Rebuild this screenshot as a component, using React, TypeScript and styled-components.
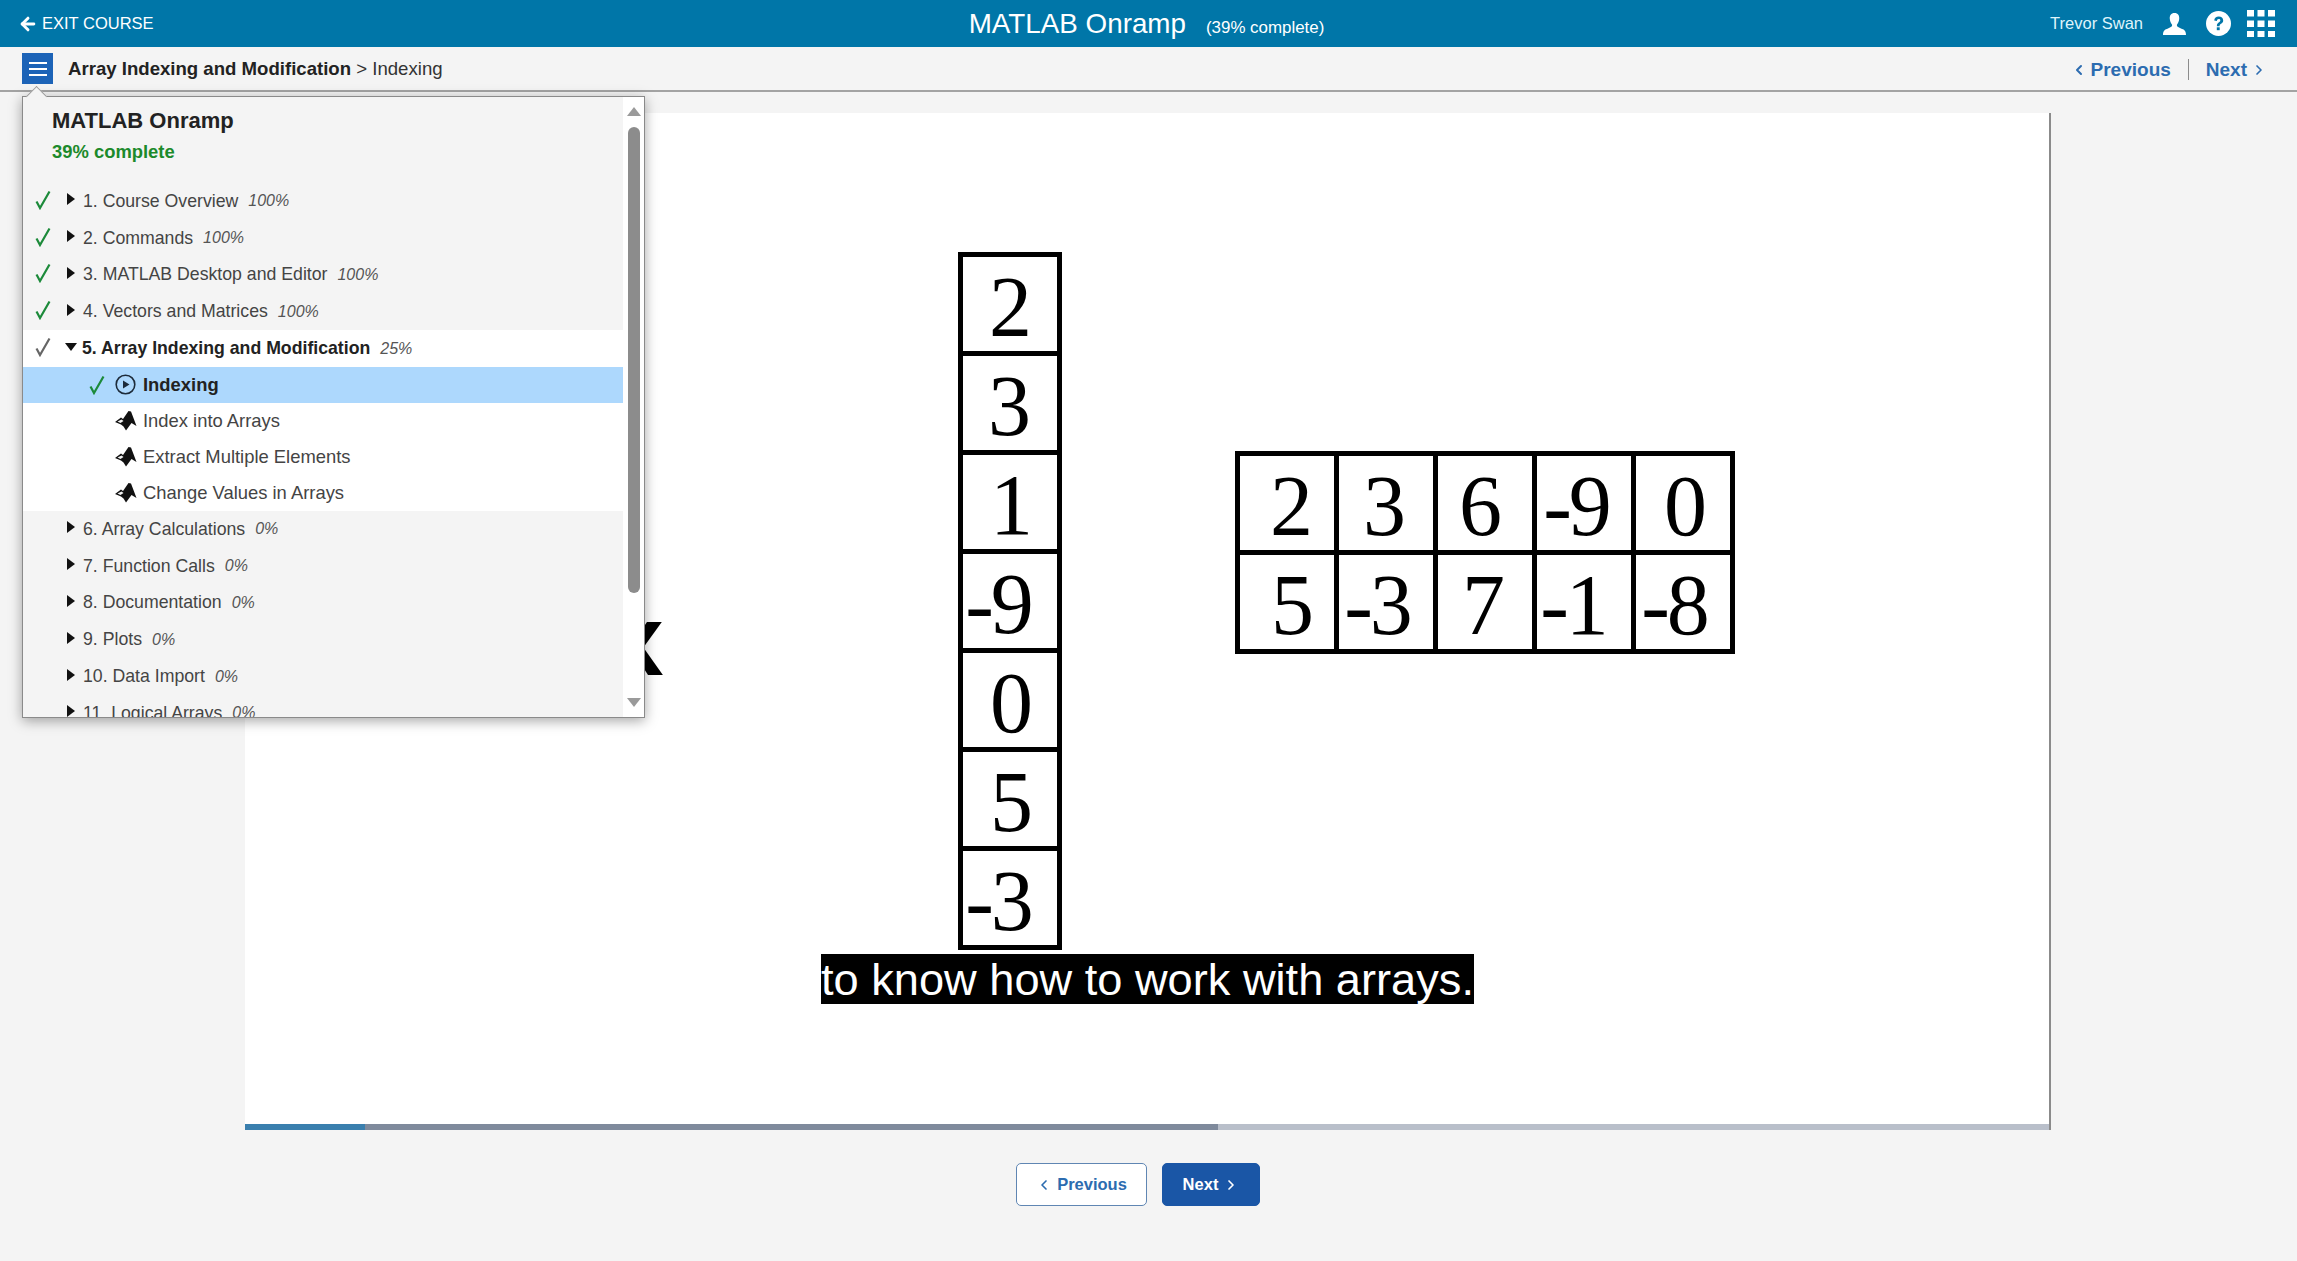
import React from "react";
import styled, { createGlobalStyle } from "styled-components";
import { ArrowLeft, ChevronLeft, ChevronRight } from "lucide-react";

const GlobalStyle = createGlobalStyle`
  html, body {
    margin: 0;
    background: #f4f4f4;
    font-family: "Liberation Sans", Arial, sans-serif;
  }
`;

const Page = styled.div`
  position: relative;
  width: 2297px;
  height: 1261px;
  overflow: hidden;
  background: #f4f4f4;
`;

// Top course bar
const Header = styled.header`
  display: grid;
  grid-template-columns: 1fr auto 1fr;
  align-items: center;
  height: 47px;
  padding: 0 22px 0 18px;
  background: #0076a8;
  color: #fff;
`;

const ExitLink = styled.a`
  display: flex;
  align-items: center;
  gap: 4px;
  font-size: 16.5px;
  color: #fff;
`;

const TitleGroup = styled.div`
  display: flex;
  align-items: baseline;
  gap: 20px;
  padding-top: 1px;
`;

const CourseTitle = styled.h1`
  margin: 0;
  font-size: 27.8px;
  font-weight: 400;
`;

const CourseProgress = styled.span`
  font-size: 16.9px;
`;

const UserArea = styled.div`
  display: flex;
  align-items: center;
  justify-content: flex-end;
  gap: 20px;

  svg:last-child {
    margin-left: -4px;
  }
`;

const UserName = styled.span`
  font-size: 16.5px;
  color: #dff4fb;
`;

// Breadcrumb bar
const SubBar = styled.div`
  display: flex;
  align-items: center;
  justify-content: space-between;
  box-sizing: border-box;
  height: 45px;
  padding: 0 30px 0 22px;
  border-bottom: 2px solid #a3a3a3;
`;

const Crumbs = styled.div`
  display: flex;
  align-items: center;
  gap: 15px;
`;

const MenuButton = styled.button`
  display: flex;
  align-items: center;
  justify-content: center;
  width: 31px;
  height: 31px;
  padding: 0;
  border: 0;
  background: #1c63b7;
`;

const Crumb = styled.span`
  font-size: 18.6px;
  color: #333;
`;

const CrumbStrong = styled.strong`
  font-weight: 700;
  color: #222;
`;

const TopNav = styled.nav`
  display: flex;
  align-items: center;
  padding-top: 2px;
`;

const TopNavLink = styled.a`
  display: flex;
  align-items: center;
  gap: 4px;
  font-size: 19px;
  font-weight: 700;
  color: #2c6cb0;
`;

const TopNavDivider = styled.span`
  width: 1px;
  height: 21px;
  margin: 0 17px;
  background: #8c8c8c;
`;

// Slide / video frame
const Slide = styled.section`
  position: relative;
  box-sizing: border-box;
  width: 1806px;
  height: 1017px;
  margin: 21px 0 0 245px;
  border-right: 2px solid #8b8b8b;
  background: #fff;
`;

const Seek = styled.div`
  position: absolute;
  left: 0;
  right: 0;
  bottom: 0;
  display: flex;
  height: 6px;
  background: #b9bfca;
`;

const SeekPart = styled.span<{ $w: number; $c: string }>`
  width: ${(p) => p.$w}px;
  background: ${(p) => p.$c};
`;

const NumberGrid = styled.div<{ $cols: number; $x: number; $y: number }>`
  position: absolute;
  left: ${(p) => p.$x}px;
  top: ${(p) => p.$y}px;
  display: grid;
  grid-template-columns: repeat(${(p) => p.$cols}, 99px);
  grid-auto-rows: 99px;
  border-top: 5px solid #000;
  border-left: 5px solid #000;
`;

const NumberCell = styled.div<{ $dx: number }>`
  display: flex;
  align-items: center;
  justify-content: center;
  box-sizing: border-box;
  padding-top: 5px;
  padding-left: ${(p) => Math.max(p.$dx, 0) * 2}px;
  padding-right: ${(p) => Math.max(-p.$dx, 0) * 2}px;
  border-right: 5px solid #000;
  border-bottom: 5px solid #000;
  font-family: "Liberation Serif", "Times New Roman", serif;
  font-size: 86px;
  line-height: 1;
  letter-spacing: -3px;
  color: #000;
`;

const Caption = styled.div`
  position: absolute;
  left: 576px;
  top: 841px;
  height: 50px;
  background: #000;
  color: #fff;
  font-size: 45.2px;
  line-height: 51px;
  white-space: nowrap;
`;

const HiddenLetter = styled.span`
  position: absolute;
  left: 363px;
  top: 477px;
  font-size: 100px;
  font-weight: 700;
  line-height: 1;
  color: #000;
`;

const BottomNav = styled.nav`
  display: flex;
  gap: 15px;
  margin: 33px 0 0 1016px;
`;

const NavButton = styled.a<{ $primary?: boolean }>`
  display: flex;
  align-items: center;
  justify-content: center;
  gap: 5px;
  box-sizing: border-box;
  width: ${(p) => (p.$primary ? 98 : 131)}px;
  height: 43px;
  border: 1px solid ${(p) => (p.$primary ? "#1a56a6" : "#5f86b3")};
  border-radius: 5px;
  background: ${(p) => (p.$primary ? "#1a56a6" : "#fff")};
  color: ${(p) => (p.$primary ? "#fff" : "#2c6cb0")};
  font-size: 16.5px;
  font-weight: 700;
`;

// Course outline popover
const Outline = styled.aside`
  position: absolute;
  left: 22px;
  top: 96px;
  display: flex;
  box-sizing: border-box;
  width: 623px;
  height: 622px;
  border: 1px solid #8a8a8a;
  background: #f4f4f4;
  box-shadow: 0 3px 12px rgba(0, 0, 0, 0.35);

  &::before {
    content: "";
    position: absolute;
    left: 6px;
    top: -8px;
    width: 14px;
    height: 14px;
    border-left: 1px solid #9a9a9a;
    border-top: 1px solid #9a9a9a;
    background: #f4f4f4;
    transform: rotate(45deg);
  }
`;

const OutlineBody = styled.div`
  position: relative;
  flex: 1;
  overflow: hidden;
`;

const OutlineHead = styled.div`
  box-sizing: border-box;
  height: 86px;
  padding: 10px 0 0 29px;
`;

const OutlineTitle = styled.h2`
  margin: 0;
  font-size: 22px;
  line-height: 27px;
  font-weight: 700;
  color: #222;
`;

const OutlinePct = styled.div`
  margin-top: 7px;
  font-size: 18.4px;
  line-height: 22px;
  font-weight: 700;
  color: #1c8a2b;
`;

const Chapter = styled.div<{ $open?: boolean }>`
  display: flex;
  align-items: center;
  height: 36.8px;
  background: ${(p) => (p.$open ? "#fff" : "transparent")};
  color: ${(p) => (p.$open ? "#222" : "#444")};
  font-size: 17.7px;
  font-weight: ${(p) => (p.$open ? 700 : 400)};
  white-space: nowrap;
`;

const CheckSlot = styled.span`
  display: flex;
  justify-content: center;
  width: 44px;
  padding-right: 5px;
  box-sizing: border-box;
  margin-top: -3px;
`;

const Caret = styled.span<{ $open?: boolean }>`
  width: 0;
  height: 0;
  margin-right: ${(p) => (p.$open ? 5 : 8)}px;
  ${(p) =>
    p.$open
      ? `border-left: 6px solid transparent; border-right: 6px solid transparent; border-top: 8px solid #111; margin-left: -2px; margin-top: -4px;`
      : `border-top: 6px solid transparent; border-bottom: 6px solid transparent; border-left: 8px solid #111; margin-top: -4px;`}
`;

const Percent = styled.em`
  margin-left: 10px;
  font-size: 16px;
  font-weight: 400;
  color: #555;
`;

const Lesson = styled.div<{ $current?: boolean }>`
  display: flex;
  align-items: center;
  height: 36px;
  padding-left: 66px;
  background: ${(p) => (p.$current ? "#add8fd" : "#fff")};
  color: ${(p) => (p.$current ? "#222" : "#444")};
  font-size: 18.4px;
  font-weight: ${(p) => (p.$current ? 700 : 400)};
  white-space: nowrap;
`;

const LessonCheck = styled.span`
  display: flex;
  width: 26px;
`;

const LessonIcon = styled.span`
  display: flex;
  width: 28px;
`;

const ScrollRail = styled.div`
  display: flex;
  flex-direction: column;
  align-items: center;
  flex: none;
  width: 21px;
  background: #fff;
`;

const ArrowUp = styled.span`
  margin-top: 10px;
  border-left: 7px solid transparent;
  border-right: 7px solid transparent;
  border-bottom: 9px solid #9a9a9a;
`;

const ArrowDown = styled.span`
  margin-top: auto;
  margin-bottom: 10px;
  border-left: 7px solid transparent;
  border-right: 7px solid transparent;
  border-top: 9px solid #9a9a9a;
`;

const Thumb = styled.span`
  width: 12px;
  height: 466px;
  margin-top: 11px;
  border-radius: 6px;
  background: #8c8c8c;
`;

const Check: React.FC<{ color?: string }> = ({ color = "#1c8a3a" }) => (
  <svg width="16" height="20" viewBox="0 0 16 20" fill="none">
    <path d="M1.5 11.5 L5 18 L14.5 1.5" stroke={color} strokeWidth="2.2" />
  </svg>
);

const MembraneIcon: React.FC = () => (
  <svg width="22" height="20" viewBox="0 0 22 20">
    <path d="M0 11 L6 6.5 L8 8 L13.5 0 L16 0.5 L21.5 15 L16.5 12 L11 19.5 L8.5 15.5 L6 13.5 Z" fill="#111" />
    <path d="M2.5 10.5 L6.5 8.5 L8.5 10 L5.5 12 Z" fill="#f4f4f4" />
  </svg>
);

const PlayIcon: React.FC = () => (
  <svg width="21" height="21" viewBox="0 0 21 21" fill="none">
    <circle cx="10.5" cy="10.5" r="9.3" stroke="#1d2b3a" strokeWidth="1.6" />
    <path d="M8 6.5 L14.5 10.5 L8 14.5 Z" fill="#1d2b3a" />
  </svg>
);

const UserIcon: React.FC = () => (
  <svg width="23" height="22" viewBox="0 0 23 22" fill="#fff">
    <path d="M11.5 0 C15 0 16.6 2.6 16.2 6 C15.9 8.8 14.8 10.6 13.9 11.8 C13.6 13.6 15 14.4 18 15.4 C21 16.4 23 17.6 23 22 L0 22 C0 17.6 2 16.4 5 15.4 C8 14.4 9.4 13.6 9.1 11.8 C8.2 10.6 7.1 8.8 6.8 6 C6.4 2.6 8 0 11.5 0 Z" />
  </svg>
);

const HelpIcon: React.FC = () => (
  <svg width="25" height="25" viewBox="0 0 25 25">
    <circle cx="12.5" cy="12.5" r="12.5" fill="#fff" />
    <path d="M8.2 9.6 C8.4 7 10.2 5.6 12.7 5.6 C15.4 5.6 17.2 7.2 17.2 9.4 C17.2 11.2 16.2 12 15 12.8 C14 13.5 13.6 14 13.6 15.2 L10.9 15.2 C10.8 13.4 11.4 12.3 12.7 11.4 C13.8 10.7 14.3 10.3 14.3 9.5 C14.3 8.6 13.7 8.1 12.7 8.1 C11.6 8.1 11 8.8 10.9 9.9 Z" fill="#0076a8" />
    <rect x="10.8" y="16.3" width="2.9" height="2.9" fill="#0076a8" />
  </svg>
);

const AppsIcon: React.FC = () => (
  <svg width="28" height="27" viewBox="0 0 28 27" fill="#fff">
    {[0, 10.5, 21].map((y) =>
      [0, 10.5, 21].map((x) => <rect key={`${x}-${y}`} x={x} y={y} width="7" height="6.5" />)
    )}
  </svg>
);

const HamburgerIcon: React.FC = () => (
  <svg width="18" height="16" viewBox="0 0 18 16" stroke="#fff" strokeWidth="1.8">
    <path d="M0 2 H18 M0 8 H18 M0 14 H18" />
  </svg>
);

const before = [
  { n: "1. Course Overview", p: "100%" },
  { n: "2. Commands", p: "100%" },
  { n: "3. MATLAB Desktop and Editor", p: "100%" },
  { n: "4. Vectors and Matrices", p: "100%" },
];

const after = [
  { n: "6. Array Calculations", p: "0%" },
  { n: "7. Function Calls", p: "0%" },
  { n: "8. Documentation", p: "0%" },
  { n: "9. Plots", p: "0%" },
  { n: "10. Data Import", p: "0%" },
  { n: "11. Logical Arrays", p: "0%" },
];

// dx: how far the number sits off the cell centre in the slide image
const vector = [
  { v: "2", dx: -1 },
  { v: "3", dx: -2 },
  { v: "1", dx: 0 },
  { v: "-9", dx: -12 },
  { v: "0", dx: 0 },
  { v: "5", dx: 0 },
  { v: "-3", dx: -12 },
];

const matrix = [
  { v: "2", dx: 3 },
  { v: "3", dx: -3 },
  { v: "6", dx: -6 },
  { v: "-9", dx: -8 },
  { v: "0", dx: 1 },
  { v: "5", dx: 4 },
  { v: "-3", dx: -9 },
  { v: "7", dx: -3 },
  { v: "-1", dx: -11 },
  { v: "-8", dx: -9 },
];

const App: React.FC = () => {
  return (
    <Page>
      <GlobalStyle />
      <Header>
        <ExitLink>
          <ArrowLeft size={20} strokeWidth={3.5} />
          EXIT COURSE
        </ExitLink>
        <TitleGroup>
          <CourseTitle>MATLAB Onramp</CourseTitle>
          <CourseProgress>(39% complete)</CourseProgress>
        </TitleGroup>
        <UserArea>
          <UserName>Trevor Swan</UserName>
          <UserIcon />
          <HelpIcon />
          <AppsIcon />
        </UserArea>
      </Header>

      <SubBar>
        <Crumbs>
          <MenuButton>
            <HamburgerIcon />
          </MenuButton>
          <Crumb>
            <CrumbStrong>Array Indexing and Modification</CrumbStrong> &gt; Indexing
          </Crumb>
        </Crumbs>
        <TopNav>
          <TopNavLink>
            <ChevronLeft size={16} strokeWidth={3} />
            Previous
          </TopNavLink>
          <TopNavDivider />
          <TopNavLink>
            Next
            <ChevronRight size={16} strokeWidth={2.5} />
          </TopNavLink>
        </TopNav>
      </SubBar>

      <Slide>
        <HiddenLetter>x</HiddenLetter>
        <NumberGrid $cols={1} $x={713} $y={139}>
          {vector.map((c, i) => (
            <NumberCell key={i} $dx={c.dx}>
              {c.v}
            </NumberCell>
          ))}
        </NumberGrid>
        <NumberGrid $cols={5} $x={990} $y={338}>
          {matrix.map((c, i) => (
            <NumberCell key={i} $dx={c.dx}>
              {c.v}
            </NumberCell>
          ))}
        </NumberGrid>
        <Caption>to know how to work with arrays.</Caption>
        <Seek>
          <SeekPart $w={120} $c="#3a7fae" />
          <SeekPart $w={853} $c="#7f8a9c" />
        </Seek>
      </Slide>

      <BottomNav>
        <NavButton>
          <ChevronLeft size={16} strokeWidth={2.5} />
          Previous
        </NavButton>
        <NavButton $primary>
          Next
          <ChevronRight size={16} strokeWidth={2.5} />
        </NavButton>
      </BottomNav>

      <Outline>
        <OutlineBody>
          <OutlineHead>
            <OutlineTitle>MATLAB Onramp</OutlineTitle>
            <OutlinePct>39% complete</OutlinePct>
          </OutlineHead>
          {before.map((c) => (
            <Chapter key={c.n}>
              <CheckSlot>
                <Check />
              </CheckSlot>
              <Caret />
              {c.n}
              <Percent>{c.p}</Percent>
            </Chapter>
          ))}
          <Chapter $open>
            <CheckSlot>
              <Check color="#666" />
            </CheckSlot>
            <Caret $open />
            5. Array Indexing and Modification
            <Percent>25%</Percent>
          </Chapter>
          <Lesson $current>
            <LessonCheck>
              <Check />
            </LessonCheck>
            <LessonIcon>
              <PlayIcon />
            </LessonIcon>
            Indexing
          </Lesson>
          {["Index into Arrays", "Extract Multiple Elements", "Change Values in Arrays"].map((l) => (
            <Lesson key={l}>
              <LessonCheck />
              <LessonIcon>
                <MembraneIcon />
              </LessonIcon>
              {l}
            </Lesson>
          ))}
          {after.map((c) => (
            <Chapter key={c.n}>
              <CheckSlot />
              <Caret />
              {c.n}
              <Percent>{c.p}</Percent>
            </Chapter>
          ))}
        </OutlineBody>
        <ScrollRail>
          <ArrowUp />
          <Thumb />
          <ArrowDown />
        </ScrollRail>
      </Outline>
    </Page>
  );
};

export default App;
